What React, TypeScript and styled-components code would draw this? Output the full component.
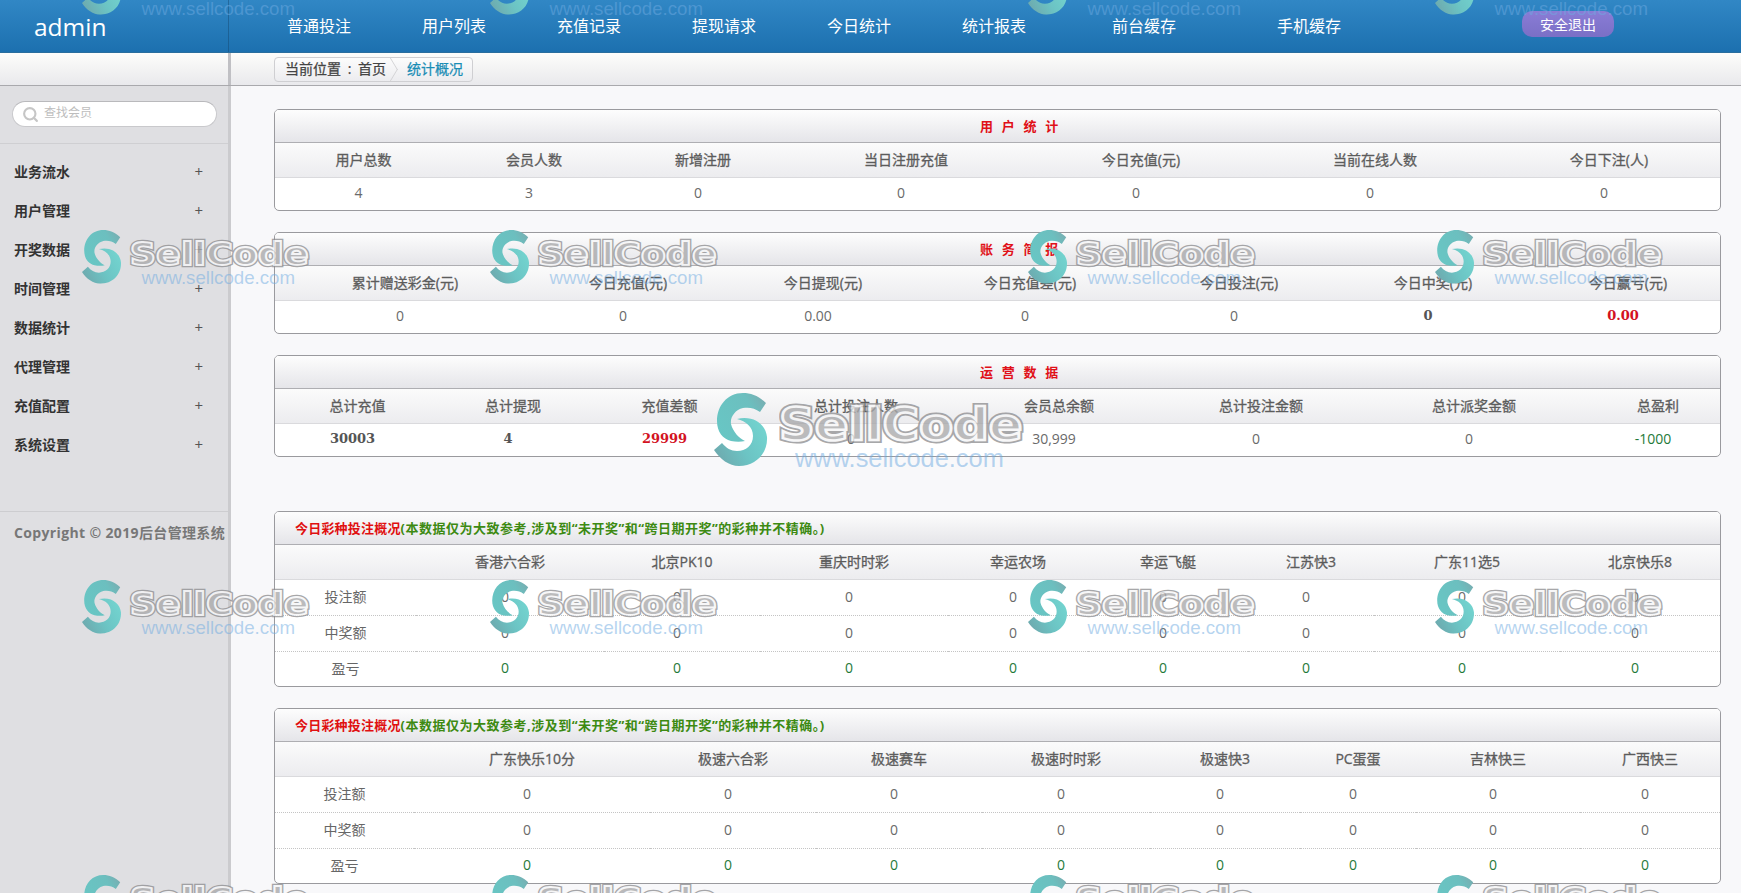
import { useId } from 'react';
import styled, { createGlobalStyle } from 'styled-components';
import { Search } from 'lucide-react';

const GlobalStyle = createGlobalStyle`
    * {
        box-sizing: border-box;
    }
    html, body {
        margin: 0;
        padding: 0;
        height: 100%;
        overflow: hidden;
    }
    body {
        background: #f8f8fa;
        font-family: "Open Sans", "Noto Sans CJK SC", sans-serif;
        color: #555;
    }
`;

type Tone = 'plain' | 'strong' | 'red' | 'redStrong' | 'green';
type Cell = { v: string; tone?: Tone };

type PanelData = {
    title?: string;
    note?: boolean;
    widths: number[];
    heads: string[];
    rows: Cell[][];
    lead?: number;
    labelled?: boolean;
    gapTop?: number;
};

const navItems = [
    { label: '普通投注', after: 71 },
    { label: '用户列表', after: 71 },
    { label: '充值记录', after: 71 },
    { label: '提现请求', after: 71 },
    { label: '今日统计', after: 71 },
    { label: '统计报表', after: 86 },
    { label: '前台缓存', after: 101 },
    { label: '手机缓存', after: 0 },
];

const menuItems = ['业务流水', '用户管理', '开奖数据', '时间管理', '数据统计', '代理管理', '充值配置', '系统设置'];

const zeros = (count: number, tone?: Tone): Cell[] => Array.from({ length: count }, () => ({ v: '0', tone }));

const lotteryRows = (): Cell[][] => [
    [{ v: '投注额' }, ...zeros(8)],
    [{ v: '中奖额' }, ...zeros(8)],
    [{ v: '盈亏' }, ...zeros(8, 'green')],
];

const panels: PanelData[] = [
    {
        title: '用 户 统 计',
        widths: [169, 180, 158, 248, 222, 246, 222],
        heads: ['用户总数', '会员人数', '新增注册', '当日注册充值', '今日充值(元)', '当前在线人数', '今日下注(人)'],
        rows: [[{ v: '4' }, { v: '3' }, ...zeros(5)]],
        lead: 8,
    },
    {
        title: '账 务 简 报',
        widths: [247, 212, 178, 236, 182, 206, 184],
        heads: ['累计赠送彩金(元)', '今日充值(元)', '今日提现(元)', '今日充值差(元)', '今日投注(元)', '今日中奖(元)', '今日赢亏(元)'],
        rows: [[
            { v: '0' },
            { v: '0' },
            { v: '0.00' },
            { v: '0' },
            { v: '0' },
            { v: '0', tone: 'strong' },
            { v: '0.00', tone: 'redStrong' },
        ]],
        lead: 13,
    },
    {
        title: '运 营 数 据',
        widths: [176, 124, 189, 184, 222, 182, 244, 124],
        heads: ['总计充值', '总计提现', '充值差额', '总计投注人数', '会员总余额', '总计投注金额', '总计派奖金额', '总盈利'],
        rows: [[
            { v: '30003', tone: 'strong' },
            { v: '4', tone: 'strong' },
            { v: '29999', tone: 'redStrong' },
            { v: '0' },
            { v: '30,999' },
            { v: '0' },
            { v: '0' },
            { v: '-1000', tone: 'green' },
        ]],
        lead: -11,
    },
    {
        note: true,
        widths: [141, 188, 156, 188, 140, 160, 126, 186, 160],
        heads: ['', '香港六合彩', '北京PK10', '重庆时时彩', '幸运农场', '幸运飞艇', '江苏快3', '广东11选5', '北京快乐8'],
        rows: lotteryRows(),
        labelled: true,
        gapTop: 54,
    },
    {
        note: true,
        widths: [139, 236, 166, 166, 168, 150, 116, 164, 140],
        heads: ['', '广东快乐10分', '极速六合彩', '极速赛车', '极速时时彩', '极速快3', 'PC蛋蛋', '吉林快三', '广西快三'],
        rows: lotteryRows(),
        labelled: true,
    },
];

const smallMarks = [-39, 230, 580, 875].flatMap((y) => [82, 490, 1028, 1435].map((x) => ({ x, y })));

const SwirlLogo = () => {
    const id = useId();
    return (
        <LogoSvg viewBox="0 0 55 73" aria-hidden="true">
            <defs>
                <linearGradient id={`${id}top`} x1="0" y1="0.7" x2="1" y2="0.1">
                    <stop offset="0" stopColor="#68c6c4" />
                    <stop offset="0.7" stopColor="#6cbfbf" />
                    <stop offset="1" stopColor="#79acb0" />
                </linearGradient>
                <linearGradient id={`${id}bottom`} x1="0" y1="0.9" x2="1" y2="0.4">
                    <stop offset="0" stopColor="#6ea6ab" />
                    <stop offset="0.55" stopColor="#6cc4c4" />
                    <stop offset="1" stopColor="#72d2ce" />
                </linearGradient>
            </defs>
            <path
                fill={`url(#${id}top)`}
                d="M52 10C45 3 37 0 29 0C13 0 3 13 3 28C3 39 9 46 17 48C22 49 27 49 31 48C25 45 19 39 17 31C16 24 21 17 29 15C35 14 41 15 46 19Z"
            />
            <path
                fill={`url(#${id}bottom)`}
                d="M0 57C6 66 15 73 25 73C42 73 54 60 53 44C52 32 40 22 23 26C32 28 39 34 39 43C39 52 32 58 23 58C17 58 12 55 8 50Z"
            />
        </LogoSvg>
    );
};

const Watermark = ({ x, y, scale }: { x: number; y: number; scale: number }) => (
    <MarkBox $x={x} $y={y} $scale={scale}>
        <SwirlLogo />
        <MarkWord>
            <MarkLetters data-word="SellCode">SellCode</MarkLetters>
        </MarkWord>
        <MarkUrl>www.sellcode.com</MarkUrl>
    </MarkBox>
);

const Panel = ({ data }: { data: PanelData }) => (
    <PanelBox $gapTop={data.gapTop ?? 21}>
        {data.note ? (
            <NoteTitle>
                <RedText>今日彩种投注概况</RedText>
                <GreenText>(本数据仅为大致参考,涉及到“未开奖”和“跨日期开奖”的彩种并不精确。)</GreenText>
            </NoteTitle>
        ) : (
            <PanelTitle>{data.title}</PanelTitle>
        )}
        <Table>
            <colgroup>
                {data.widths.map((width, i) => (
                    <col key={i} style={{ width }} />
                ))}
            </colgroup>
            <thead>
                <tr>
                    {data.heads.map((head, i) => (
                        <HeadCell key={i} $lead={i === 0 ? data.lead ?? 0 : 0}>
                            {head}
                        </HeadCell>
                    ))}
                </tr>
            </thead>
            <tbody>
                {data.rows.map((row, r) => (
                    <DataRow key={r} $tall={!!data.labelled} $last={r === data.rows.length - 1}>
                        {row.map((cell, i) =>
                            data.labelled && i === 0 ? (
                                <LabelCell key={i}>{cell.v}</LabelCell>
                            ) : (
                                <DataCell key={i} $tone={cell.tone ?? 'plain'} $lead={i === 0 ? data.lead ?? 0 : 0}>
                                    {cell.v}
                                </DataCell>
                            ),
                        )}
                    </DataRow>
                ))}
            </tbody>
        </Table>
    </PanelBox>
);

const App = () => (
    <Page>
        <GlobalStyle />
        <Header>
            <Brand>admin</Brand>
            <Nav>
                {navItems.map((item) => (
                    <NavLink key={item.label} $after={item.after}>
                        {item.label}
                    </NavLink>
                ))}
            </Nav>
            <Logout>安全退出</Logout>
        </Header>
        <SubBar>
            <SubBarSide />
            <Breadcrumb>
                <CrumbHome>当前位置 : 首页</CrumbHome>
                <CrumbCurrent>统计概况</CrumbCurrent>
            </Breadcrumb>
        </SubBar>
        <Body>
            <Sidebar>
                <SearchArea>
                    <SearchPill>
                        <Search size={17} strokeWidth={3} color="#c6c6c6" />
                        <SearchInput placeholder="查找会员" />
                    </SearchPill>
                </SearchArea>
                <Menu>
                    {menuItems.map((item) => (
                        <MenuItem key={item}>
                            <span>{item}</span>
                            <MenuPlus>+</MenuPlus>
                        </MenuItem>
                    ))}
                </Menu>
                <Copyright>Copyright © 2019后台管理系统</Copyright>
            </Sidebar>
            <Main>
                {panels.map((panel, i) => (
                    <Panel key={i} data={panel} />
                ))}
            </Main>
        </Body>
        <MarkLayer>
            {smallMarks.map((mark) => (
                <Watermark key={`${mark.x}-${mark.y}`} x={mark.x} y={mark.y} scale={0.735} />
            ))}
            <Watermark x={714} y={393} scale={1} />
        </MarkLayer>
    </Page>
);

export default App;

const Page = styled.div`
    position: relative;
    width: 100%;
    height: 893px;
    overflow: hidden;
    display: flex;
    flex-direction: column;
`;

const Header = styled.header`
    height: 53px;
    flex: none;
    display: flex;
    align-items: center;
    background: linear-gradient(#3187c5, #1c70af);
    border-bottom: 1px solid #2a6e9e;
`;

const Brand = styled.div`
    width: 229px;
    height: 100%;
    flex: none;
    padding-left: 34px;
    display: flex;
    align-items: center;
    font-size: 24.5px;
    color: #fff;
    border-right: 1px solid rgba(20, 70, 110, 0.45);
`;

const Nav = styled.nav`
    display: flex;
    align-items: center;
    padding-left: 58px;
`;

const NavLink = styled.a<{ $after: number }>`
    margin-right: ${(p) => p.$after}px;
    font-size: 16px;
    line-height: 22px;
    color: #fff;
    white-space: nowrap;
`;

const Logout = styled.button`
    width: 92px;
    height: 26px;
    margin: 0 127px 5px auto;
    padding: 0;
    border: 0;
    border-radius: 10px;
    background: linear-gradient(#8a7cd6, #7a6fc6);
    font: inherit;
    font-size: 14px;
    color: #fff;
`;

const SubBar = styled.div`
    height: 33px;
    flex: none;
    display: flex;
    align-items: center;
    background: linear-gradient(#fdfdfb, #e9e9ec);
    border-bottom: 1px solid #a9a9ad;
`;

const SubBarSide = styled.div`
    width: 231px;
    height: 100%;
    flex: none;
    border-right: 3px solid #c0c0c4;
`;

const Breadcrumb = styled.div`
    height: 25px;
    margin-left: 43px;
    padding: 0 9px 2px 10px;
    display: flex;
    align-items: center;
    gap: 21px;
    font-size: 14px;
    white-space: nowrap;
    -webkit-text-stroke: 0.25px currentColor;
    background: linear-gradient(#fcfcfc, #ececef);
    border: 1px solid #cfcfd2;
    border-radius: 4px;
`;

const CrumbHome = styled.span`
    position: relative;
    color: #444;
    word-spacing: 3px;
    &::after {
        content: '';
        position: absolute;
        top: 3px;
        right: -13px;
        width: 16px;
        height: 16px;
        border-top: 1px solid #cfcfd2;
        border-right: 1px solid #cfcfd2;
        transform: scaleX(0.6) rotate(45deg);
    }
`;

const CrumbCurrent = styled.span`
    color: #1a8db5;
`;

const Body = styled.div`
    flex: 1;
    display: flex;
    min-height: 0;
`;

const Sidebar = styled.aside`
    width: 231px;
    flex: none;
    background: #dfdfe2;
    border-right: 3px solid #cbcbce;
`;

const SearchArea = styled.div`
    height: 58px;
    padding: 15px 12px 0;
    border-bottom: 1px solid #cfcfd2;
`;

const SearchPill = styled.label`
    width: 205px;
    height: 26px;
    padding: 0 9px;
    display: flex;
    align-items: center;
    gap: 5px;
    background: #fff;
    border: 1px solid #c9c9cc;
    border-top-color: #b9b9bc;
    border-radius: 13px;
`;

const SearchInput = styled.input`
    width: 120px;
    padding: 0 0 3px;
    border: 0;
    outline: 0;
    background: transparent;
    font: inherit;
    font-size: 12px;
    &::placeholder {
        color: #bdbdbd;
    }
`;

const Menu = styled.ul`
    list-style: none;
    margin: 0;
    height: 368px;
    padding: 7px 0 0;
    border-bottom: 1px solid #cdcdd0;
`;

const MenuItem = styled.li`
    height: 39px;
    padding: 0 25px 0 14px;
    display: flex;
    align-items: center;
    justify-content: space-between;
    font-size: 14px;
    font-weight: 700;
    color: #333;
`;

const MenuPlus = styled.span`
    font-weight: 400;
    font-size: 15px;
    color: #555;
`;

const Copyright = styled.div`
    margin-top: 11px;
    padding-left: 14px;
    font-size: 14px;
    font-weight: 700;
    line-height: 20px;
    letter-spacing: 0.36px;
    white-space: nowrap;
    color: #777;
`;

const Main = styled.main`
    flex: 1;
    min-width: 0;
    padding: 2px 20px 0 43px;
`;

const PanelBox = styled.section<{ $gapTop: number }>`
    margin-top: ${(p) => p.$gapTop}px;
    background: #fff;
    border: 1px solid #9a9a9e;
    border-radius: 5px;
    overflow: hidden;
`;

const PanelTitle = styled.h2`
    height: 33px;
    margin: 0;
    padding: 0 0 2px 46px;
    display: flex;
    align-items: center;
    justify-content: center;
    font-size: 13px;
    font-weight: 700;
    letter-spacing: 2.7px;
    white-space: pre;
    color: #e01018;
    background: linear-gradient(#fdfdfd, #e5e5e9);
    border-bottom: 1px solid #aeaeb2;
`;

const NoteTitle = styled(PanelTitle)`
    justify-content: flex-start;
    padding-left: 20px;
    letter-spacing: 0;
`;

const RedText = styled.span`
    color: #e01010;
    letter-spacing: 0.2px;
`;

const GreenText = styled.span`
    color: #3d8a12;
    letter-spacing: 0.5px;
`;

const Table = styled.table`
    width: 100%;
    table-layout: fixed;
    border-collapse: collapse;
`;

const leadPadding = (lead: number) => (lead > 0 ? `padding-left: ${lead}px;` : lead < 0 ? `padding-right: ${-lead}px;` : '');

const HeadCell = styled.th<{ $lead: number }>`
    height: 34px;
    padding: 0 0 2px;
    ${(p) => leadPadding(p.$lead)}
    font-size: 14px;
    font-weight: 400;
    -webkit-text-stroke: 0.3px currentColor;
    text-align: center;
    color: #5c5c5c;
    background: linear-gradient(#fbfbfb, #ececef);
    border-bottom: 1px solid #dadadd;
`;

const DataRow = styled.tr<{ $tall: boolean; $last: boolean }>`
    height: ${(p) => (p.$tall ? (p.$last ? 35 : 36) : 33)}px;
    border-bottom: ${(p) => (p.$last ? '0' : '1px dotted #c4c4c4')};
`;

const LabelCell = styled.td`
    padding: 0 0 2px;
    font-size: 14px;
    text-align: center;
    color: #666;
`;

const toneStyles: Record<Tone, string> = {
    plain: 'color: #6a6a6a;',
    strong: 'color: #555; font-family: "DejaVu Serif", serif; font-weight: 700; font-size: 13px;',
    red: 'color: #d3121f;',
    redStrong: 'color: #d3121f; font-family: "DejaVu Serif", serif; font-weight: 700; font-size: 13px;',
    green: 'color: #1f7a3a;',
};

const DataCell = styled.td<{ $tone: Tone; $lead: number }>`
    padding: 0 10px 2px 0;
    ${(p) => (p.$lead > 0 ? `padding-left: ${p.$lead}px;` : p.$lead < 0 ? `padding-right: ${10 - p.$lead}px;` : '')}
    font-size: 14px;
    text-align: center;
    ${(p) => toneStyles[p.$tone]}
`;

const MarkLayer = styled.div`
    position: absolute;
    inset: 0;
    overflow: hidden;
    pointer-events: none;
`;

const MarkBox = styled.div<{ $x: number; $y: number; $scale: number }>`
    position: absolute;
    left: ${(p) => p.$x}px;
    top: ${(p) => p.$y}px;
    width: 320px;
    height: 75px;
    transform: scale(${(p) => p.$scale});
    transform-origin: 0 0;
`;

const LogoSvg = styled.svg`
    position: absolute;
    left: 0;
    top: 0;
    width: 55px;
    height: 73px;
`;

const MarkWord = styled.div`
    position: absolute;
    left: 65px;
    top: 6px;
    opacity: 0.78;
    transform: scaleX(1.13);
    transform-origin: 0 0;
`;

const MarkLetters = styled.span`
    position: relative;
    display: block;
    font-family: "DejaVu Sans", sans-serif;
    font-size: 44px;
    font-weight: 700;
    line-height: 52px;
    white-space: nowrap;
    color: #8f8f92;
    -webkit-text-stroke: 6px #8f8f92;
    &::after {
        content: attr(data-word);
        position: absolute;
        left: 0;
        top: 0;
        color: #a8a8aa;
        -webkit-text-stroke: 2.5px #f6f6f7;
    }
`;

const MarkUrl = styled.div`
    position: absolute;
    left: 81px;
    top: 50px;
    font-family: "Liberation Sans", sans-serif;
    font-size: 25.4px;
    line-height: 30px;
    white-space: nowrap;
    color: rgba(110, 170, 225, 0.5);
`;
